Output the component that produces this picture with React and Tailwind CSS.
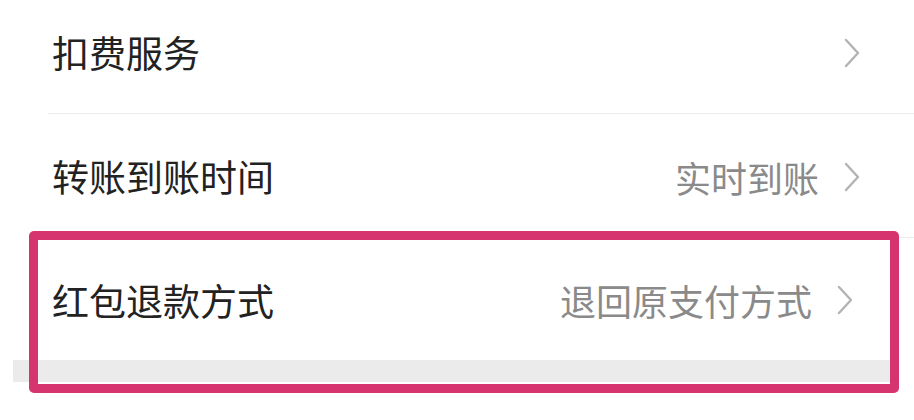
import React from "react";

function Chevron() {
  return (
    <svg width="18" height="30" viewBox="0 0 18 30" className="shrink-0">
      <path d="M3 2 L15 15 L3 28" fill="none" stroke="#b3b3b3" strokeWidth="2.4" strokeLinecap="round" strokeLinejoin="round" />
    </svg>
  );
}

function Row({ label, value, className }) {
  return (
    <div className={"flex items-center justify-between pl-[52px] " + className}>
      <span className="text-[37px] leading-none text-[#222222]">{label}</span>
      <div className="flex items-center gap-[24px]">
        {value ? <span className="text-[36px] leading-none text-[#8a8a8a]">{value}</span> : null}
        <Chevron />
      </div>
    </div>
  );
}

export default function App() {
  return (
    <div
      className="relative w-[914px] h-[420px] overflow-hidden bg-white"
      style={{ fontFamily: '"Noto Sans CJK SC", "Noto Sans", sans-serif' }}
    >
      <Row label="扣费服务" className="h-[113px] pb-[8px] pr-[53px]" />
      <div className="ml-[48px] h-px bg-[#ededed]" />
      <Row label="转账到账时间" value="实时到账" className="h-[123px] pt-[2px] pr-[53px]" />
      <div className="ml-[48px] h-px bg-[#ededed]" />
      <Row label="红包退款方式" value="退回原支付方式" className="h-[122px] pt-[2px] pr-[60px]" />
      <div className="ml-[13px] mr-[22px] h-[22px] bg-[#ebebeb]" />
      <div className="absolute left-[29px] top-[231px] w-[870px] h-[162px] rounded-[5px] border-[9px] border-[#d6346f]" />
    </div>
  );
}
